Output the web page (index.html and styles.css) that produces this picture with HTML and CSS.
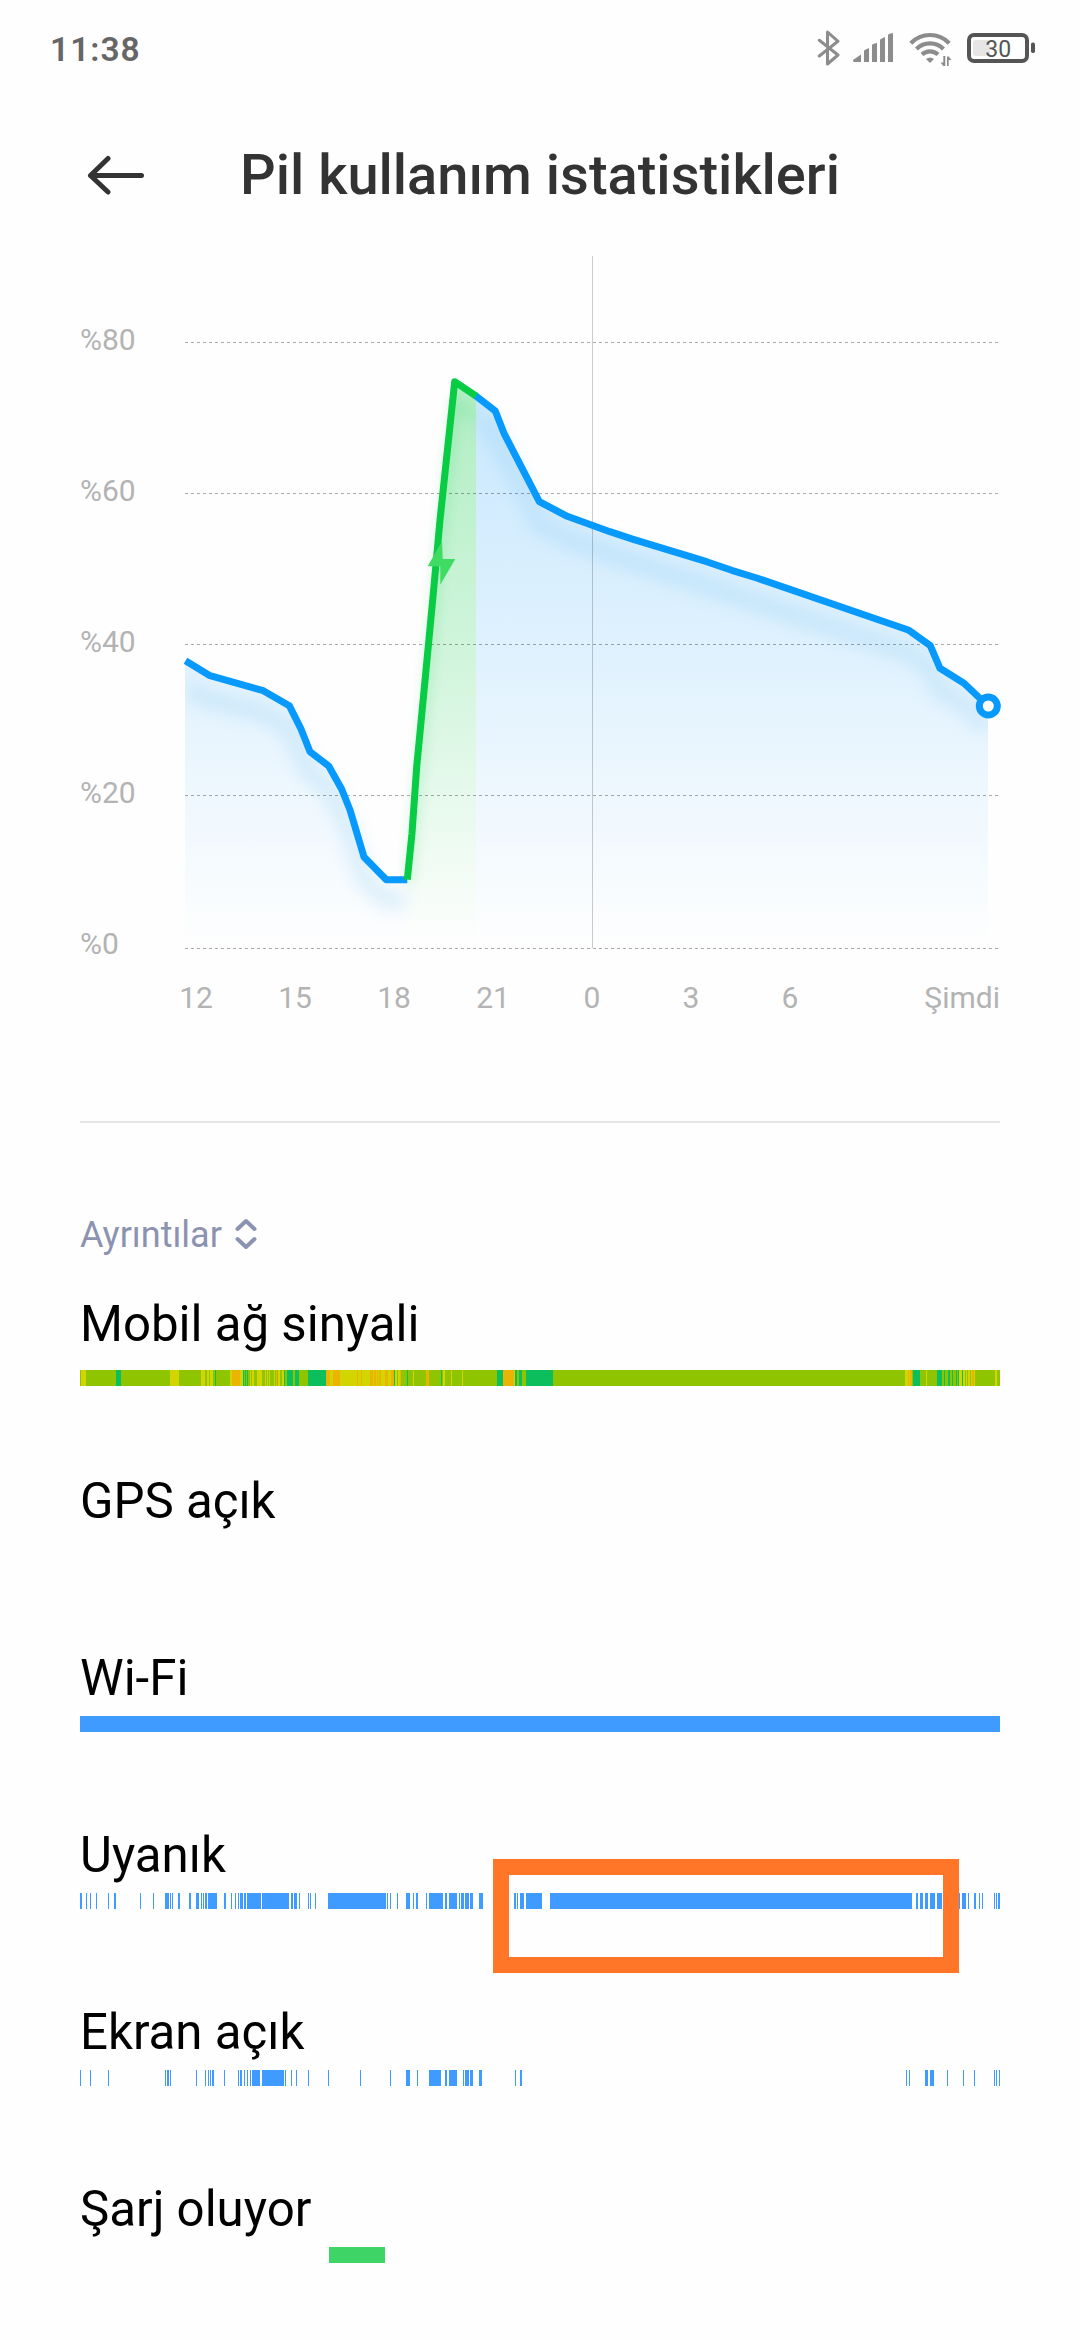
FILE: index.html
```html
<!DOCTYPE html>
<html lang="tr">
<head>
<meta charset="utf-8">
<title>Pil kullanım istatistikleri</title>
<link rel="stylesheet" href="styles.css">
</head>
<body>
<div class="status">
  <span class="clock">11:38</span>
  <div class="status-icons">
    <svg class="ic-bt" width="24" height="36" viewBox="0 0 24 36"><path d="M3.3 10.3 22 25 11.5 34V2L22 11.3 3.3 26"/></svg>
    <svg class="ic-signal" width="40" height="30" viewBox="0 0 40 30"><path d="M0 27 8 21.500V29H1Q0 29 0 27ZM11 18Q11 17 16 15V29H11ZM19 12Q19 11 24 10V29H19ZM27 7Q27 6 32 4V29H27ZM35 2Q35 1 40 0V29H35Z"/></svg>
    <svg class="ic-wifi" width="46" height="36" viewBox="0 0 46 36">
      <g class="arc"><path d="M2.800 11.200A26.600 26.600 0 0 1 41.200 11.200"/><path d="M8.500 17A19 19 0 0 1 35.500 17"/><path d="M14 22.500A12 12 0 0 1 30 22.500"/></g>
      <path class="solid" d="M18 27Q22 24 26 27L22 31ZM35.300 24h2v10h-2L32.500 30.500h2.800ZM39 34V24.500h1.700L43.500 28h-2.800V34Z"/>
    </svg>
    <svg class="ic-battery" width="68" height="32" viewBox="0 0 68 32">
      <rect class="charge" x="6" y="8" width="17" height="16" rx="3"/>
      <rect class="shell" x="2" y="3" width="58" height="26" rx="5"/>
      <rect class="nub" x="64" y="10.500" width="4" height="10.500" rx="1.800"/>
      <text x="18.300" y="24.800">30</text>
    </svg>
  </div>
</div>
<header class="header">
  <svg class="back" width="58" height="40" viewBox="0 0 58 40"><path d="M54.500 20.500H3.500M21 3.500 3.500 20.500 21 37"/></svg>
  <h1>Pil kullanım istatistikleri</h1>
</header>
<main>
<svg class="chart" width="1080" height="790" viewBox="0 240 1080 790">
  <defs>
    <linearGradient id="blue" gradientUnits="userSpaceOnUse" x1="0" y1="380" x2="0" y2="948"><stop offset="0" stop-color="#0899ff" stop-opacity=".22"/><stop offset=".5" stop-color="#0899ff" stop-opacity=".12"/><stop offset="1" stop-color="#0899ff" stop-opacity="0"/></linearGradient>
    <linearGradient id="green" gradientUnits="userSpaceOnUse" x1="0" y1="380" x2="0" y2="948"><stop offset="0" stop-color="#08cc44" stop-opacity=".32"/><stop offset=".5" stop-color="#08cc44" stop-opacity=".18"/><stop offset="1" stop-color="#08cc44" stop-opacity="0"/></linearGradient>
    <filter id="soft" filterUnits="userSpaceOnUse" x="150" y="340" width="880" height="640"><feGaussianBlur stdDeviation="8"/></filter>
    <filter id="glow" filterUnits="userSpaceOnUse" x="150" y="340" width="880" height="640"><feGaussianBlur stdDeviation="6"/></filter>
    <clipPath id="plot"><path d="M185 256H988V960H185Z"/></clipPath>
  </defs>
  <path fill="url(#blue)" d="M185 660.700 210 675.700 263.300 690.700 289.300 705.700 300.700 728.300 310 751.700 328.700 766 341.700 789.300 350 810 364 857 386.300 879.700H407.300V948H185Z"/>
  <path fill="url(#green)" d="M407.300 879.700 412 833.300 416.700 766.700 427.300 660 440 520 454.700 381.700 476 396V948H407.300Z"/>
  <path fill="url(#blue)" d="M476 396 495.300 411 504 433.300 539.300 501.700 567.300 516.300 610 531.700 633.300 539.300 706.700 561.700 731.700 570.300 756.700 578 909 630.300 930.300 645.700 940 668.300 964 683.300 988 706V948H476Z"/>
  <g class="shadow" clip-path="url(#plot)">
    <path filter="url(#soft)" d="M186 689 210 700 263 713 289 728 310 774 329 788 350 832 364 879 386 900H405"/>
    <path filter="url(#soft)" d="M478 420 495 435 539 524 567 539 633 562 909 653 930 668 940 690 964 705 988 728"/>
  </g>
  <path class="green-shadow" filter="url(#glow)" d="M409 883 416.700 790 427.300 680 440 540 454.700 403 474 416"/>
  <g class="grid"><path d="M185 342.500H998.500M185 493.500H998.500M185 644.500H998.500M185 795.500H998.500M185 948.500H998.500"/></g>
  <path class="midnight" d="M592.500 256V948"/>
  <path class="line" d="M185.500 660.700 210 675.700 263.300 690.700 289.300 705.700 300.700 728.300 310 751.700 328.700 766 341.700 789.300 350 810 364 857 386.300 879.700H407.300"/>
  <path class="line" d="M475 395.300 495.300 411 504 433.300 539.300 501.700 567.300 516.300 610 531.700 633.300 539.300 706.700 561.700 731.700 570.300 756.700 578 909 630.300 930.300 645.700 940 668.300 964 683.300 988 706"/>
  <path class="line charging" d="M407.300 879.700 412 833.300 416.700 766.700 423.300 698.300 432.700 600 440 520 454.700 381.700 476 396"/>
  <path class="bolt" d="M442 541 427.700 566.300H440.300V584.700L455.300 559H442.700Z"/>
  <circle class="now" cx="988.300" cy="706" r="9"/>
  <g class="axis">
    <text x="80" y="350">%80</text><text x="80" y="501">%60</text><text x="80" y="652">%40</text><text x="80" y="803">%20</text><text x="80" y="954">%0</text>
    <g class="hours"><text x="196" y="1008">12</text><text x="295" y="1008">15</text><text x="394" y="1008">18</text><text x="493" y="1008">21</text><text x="592" y="1008">0</text><text x="691" y="1008">3</text><text x="790" y="1008">6</text></g>
    <text class="end" x="1000" y="1008">Şimdi</text>
  </g>
</svg>
<hr>
<div class="details"><span>Ayrıntılar</span><svg width="22" height="32" viewBox="0 0 22 32"><path d="M2.500 11 11 3 19.500 11M2.500 21 11 29 19.500 21"/></svg></div>
<section class="row signal"><h2>Mobil ağ sinyali</h2>
  <svg class="bar" width="920" height="16" viewBox="0 0 920 16"><rect class="g" width="920" height="16"/>
    <path class="y" d="M1 0h5v16h-5zM90 0h9v16h-9zM121 0h4v16h-4zM127 0h2v16h-2zM130 0h3v16h-3zM150 0h2v16h-2zM160 0h3v16h-3zM170 0h1v16h-1zM172 0h2v16h-2zM177 0h5v16h-5zM185 0h1v16h-1zM187 0h1v16h-1zM189 0h1v16h-1zM194 0h1v16h-1zM198 0h2v16h-2zM202 0h2v16h-2zM246 0h68v16h-68zM315 0h2v16h-2zM318 0h2v16h-2zM333 0h1v16h-1zM363 0h2v16h-2zM371 0h1v16h-1zM382 0h1v16h-1zM434 0h1v16h-1zM825 0h7v16h-7zM846 0h1v16h-1zM879 0h3v16h-3zM883 0h2v16h-2zM886 0h1v16h-1zM888 0h2v16h-2zM891 0h4v16h-4zM915 0h2v16h-2z"/>
    <path class="o" d="M152 0h8v16h-8zM196 0h1v16h-1zM246 0h4v16h-4zM253 0h7v16h-7zM277 0h1v16h-1zM281 0h1v16h-1zM290 0h3v16h-3zM294 0h2v16h-2zM297 0h1v16h-1zM299 0h2v16h-2zM305 0h3v16h-3zM311 0h3v16h-3zM320 0h1v16h-1zM346 0h3v16h-3zM423 0h11v16h-11zM828 0h1v16h-1zM830 0h2v16h-2zM892 0h2v16h-2z"/>
    <path class="t" d="M36 0h5v16h-5zM135 0h1v16h-1zM163 0h1v16h-1zM165 0h1v16h-1zM167 0h1v16h-1zM204 0h1v16h-1zM207 0h6v16h-6zM215 0h4v16h-4zM228 0h18v16h-18zM314 0h1v16h-1zM327 0h1v16h-1zM361 0h1v16h-1zM417 0h6v16h-6zM435 0h2v16h-2zM439 0h3v16h-3zM446 0h27v16h-27zM833 0h7v16h-7zM857 0h5v16h-5zM864 0h1v16h-1zM868 0h2v16h-2zM872 0h1v16h-1zM876 0h1v16h-1zM878 0h1v16h-1zM882 0h1v16h-1z"/>
  </svg></section>
<section class="row"><h2>GPS açık</h2></section>
<section class="row"><h2>Wi-Fi</h2><svg class="bar" width="920" height="16" viewBox="0 0 920 16"><rect class="b" width="920" height="16"/></svg></section>
<section class="row awake"><h2>Uyanık</h2>
  <svg class="bar" width="920" height="16" viewBox="0 0 920 16"><path class="b" d="M0 0h2v16h-2zM6 0h1v16h-1zM10 0h1v16h-1zM16 0h1v16h-1zM28 0h1v16h-1zM34 0h2v16h-2zM60 0h1v16h-1zM73 0h1v16h-1zM85 0h4v16h-4zM90 0h1v16h-1zM92 0h1v16h-1zM98 0h2v16h-2zM109 0h2v16h-2zM116 0h3v16h-3zM121 0h1v16h-1zM123 0h1v16h-1zM125 0h2v16h-2zM128 0h9v16h-9zM144 0h2v16h-2zM151 0h1v16h-1zM155 0h1v16h-1zM158 0h1v16h-1zM160 0h3v16h-3zM164 0h2v16h-2zM167 0h14v16h-14zM182 0h27v16h-27zM211 0h2v16h-2zM214 0h3v16h-3zM219 0h1v16h-1zM228 0h1v16h-1zM230 0h1v16h-1zM235 0h1v16h-1zM248 0h58v16h-58zM307 0h1v16h-1zM310 0h1v16h-1zM317 0h1v16h-1zM326 0h4v16h-4zM333 0h1v16h-1zM336 0h2v16h-2zM346 0h1v16h-1zM349 0h14v16h-14zM365 0h2v16h-2zM369 0h8v16h-8zM379 0h1v16h-1zM381 0h3v16h-3zM385 0h4v16h-4zM390 0h3v16h-3zM399 0h4v16h-4zM434 0h2v16h-2zM437 0h1v16h-1zM440 0h4v16h-4zM446 0h16v16h-16zM470 0h362v16h-362zM836 0h2v16h-2zM840 0h3v16h-3zM845 0h3v16h-3zM850 0h5v16h-5zM857 0h5v16h-5zM878 0h2v16h-2zM882 0h4v16h-4zM888 0h1v16h-1zM894 0h2v16h-2zM899 0h1v16h-1zM902 0h1v16h-1zM914 0h1v16h-1zM916 0h1v16h-1zM918 0h2v16h-2z"/></svg>
  <div class="highlight"></div></section>
<section class="row"><h2>Ekran açık</h2>
  <svg class="bar" width="920" height="16" viewBox="0 0 920 16"><path class="b" d="M0 0h1v16h-1zM10 0h1v16h-1zM28 0h1v16h-1zM85 0h1v16h-1zM87 0h2v16h-2zM90 0h1v16h-1zM116 0h1v16h-1zM125 0h1v16h-1zM128 0h1v16h-1zM130 0h1v16h-1zM132 0h2v16h-2zM144 0h1v16h-1zM158 0h1v16h-1zM160 0h2v16h-2zM164 0h1v16h-1zM167 0h1v16h-1zM170 0h1v16h-1zM172 0h8v16h-8zM182 0h22v16h-22zM205 0h1v16h-1zM211 0h1v16h-1zM216 0h1v16h-1zM228 0h1v16h-1zM248 0h1v16h-1zM280 0h1v16h-1zM310 0h1v16h-1zM326 0h4v16h-4zM337 0h1v16h-1zM349 0h12v16h-12zM365 0h2v16h-2zM369 0h8v16h-8zM383 0h1v16h-1zM385 0h4v16h-4zM390 0h3v16h-3zM399 0h3v16h-3zM435 0h1v16h-1zM440 0h2v16h-2zM826 0h1v16h-1zM829 0h1v16h-1zM845 0h3v16h-3zM850 0h4v16h-4zM867 0h1v16h-1zM883 0h1v16h-1zM894 0h1v16h-1zM914 0h1v16h-1zM916 0h1v16h-1zM919 0h1v16h-1z"/></svg></section>
<section class="row"><h2>Şarj oluyor</h2><svg class="bar" width="920" height="16" viewBox="0 0 920 16"><rect class="c" x="249" width="56" height="16"/></svg></section>
</main>
</body>
</html>
```
FILE: styles.css
```css
* { box-sizing: border-box; }
body {
  margin: 0;
  width: 1080px;
  height: 2340px;
  overflow: hidden;
  background: #fefefe;
  font-family: Roboto, sans-serif;
}
svg { display: block; flex: none; }
h1, h2 { margin: 0; }

.status {
  display: flex;
  justify-content: space-between;
  height: 98px;
  padding: 30px 45px 0 50px;
}
.clock { font-size: 33.5px; line-height: 39px; font-weight: 600; letter-spacing: 1px; color: #666; }
.status-icons { display: flex; align-items: flex-start; }
.ic-bt path { fill: none; stroke: #8c8c8c; stroke-width: 3; stroke-linejoin: round; stroke-linecap: round; }
.ic-signal { margin: 3px 0 0 13px; fill: #8c8c8c; }
.ic-wifi { margin: 2px 0 0 15px; }
.arc { fill: none; stroke: #8c8c8c; stroke-width: 4.2; }
.solid { fill: #8c8c8c; }
.ic-battery { margin: 2px 0 0 13px; }
.shell { fill: none; stroke: #555; stroke-width: 4; }
.nub { fill: #555; }
.charge { fill: #e6e6e6; }
.ic-battery text { font-size: 23px; fill: #555; }

.header { display: flex; height: 142px; padding: 57px 0 0 87px; }
.back path { fill: none; stroke: #333; stroke-width: 5; stroke-linecap: round; stroke-linejoin: round; }
.header h1 {
  margin: -13px 0 0 95px;
  font-size: 56px;
  line-height: 66px;
  font-weight: 500;
  color: #333;
  white-space: nowrap;
}

.line { fill: none; stroke: #0899fc; stroke-width: 7; stroke-linejoin: round; }
.charging { stroke: #08cc44; }
.shadow path { fill: none; stroke: #7cc4ee; stroke-width: 18; opacity: .22; }
.green-shadow { fill: none; stroke: #08cc44; stroke-width: 10; opacity: .15; }
.grid path { fill: none; stroke: #000; stroke-opacity: .33; stroke-dasharray: 3 3; }
.midnight { stroke: #000; stroke-opacity: .2; }
.bolt { fill: #3fdb63; }
.now { fill: #fff; stroke: #0899fc; stroke-width: 7; }
.axis { font-size: 30px; fill: #b3b3b3; }
.hours { text-anchor: middle; }
.end { text-anchor: end; }

hr { width: 920px; height: 2px; margin: 91px auto 0; border: 0; background: #e4e4e4; }
.details {
  display: flex;
  height: 168px;
  padding: 91px 0 0 80px;
  font-size: 36px;
  line-height: 42px;
  color: #8c93b0;
}
.details svg { margin: 4px 0 0 13px; }
.details path { fill: none; stroke: #8c93b0; stroke-width: 4; stroke-linecap: round; stroke-linejoin: round; }

.row { position: relative; height: 177px; padding: 0 80px; }
.row h2 { height: 71px; padding-top: 4px; font-size: 49.2px; line-height: 58px; font-weight: 400; color: #000; }
.signal h2 { height: 79px; }
.bar { shape-rendering: crispEdges; }
.g { fill: #8fc400; }
.y { fill: #d3d500; }
.o { fill: #ebb400; }
.t { fill: #0dbf5c; }
.b { fill: #3f9bff; }
.c { fill: #3ed466; }
.highlight {
  position: absolute;
  left: 493px;
  top: 37px;
  width: 466px;
  height: 114px;
  border: 16px solid #ff7629;
}
```
